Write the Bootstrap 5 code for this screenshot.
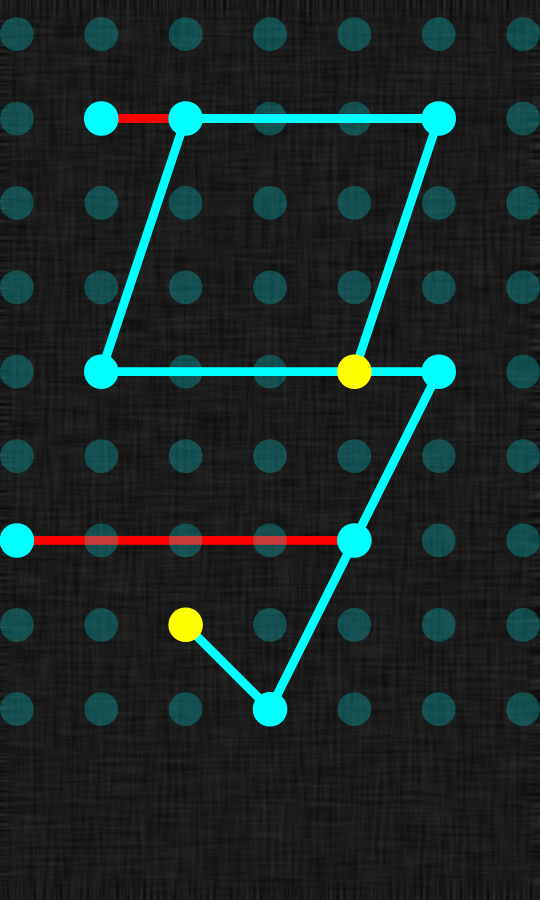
<!DOCTYPE html>
<html lang="en">
<head>
<meta charset="utf-8">
<meta name="viewport" content="width=device-width, initial-scale=1">
<title>Line puzzle</title>
<link href="https://cdn.jsdelivr.net/npm/bootstrap@5.3.0/dist/css/bootstrap.min.css" rel="stylesheet">
<style>
  body { background: #1b1d1c; }
  .cloth { z-index: 0; }
  .board { z-index: 1; }
  .peg { fill: #00ffff; fill-opacity: .23; }
  .wire { fill: none; stroke: #00ffff; stroke-width: 21; }
  .wire-crossed { stroke: #ff0000; }
  .knot { fill: #00ffff; }
  .knot-end { fill: #ffff00; }
</style>
<script src="https://cdn.jsdelivr.net/npm/bootstrap@5.3.0/dist/js/bootstrap.bundle.min.js"></script>
</head>
<body class="min-vh-100 position-relative overflow-x-hidden">
<!-- woven cloth texture, with frayed threads along the borders -->
<svg class="cloth position-absolute top-0 start-0 w-100 h-100" aria-hidden="true">
  <defs>
    <filter id="weave" x="0" y="0" width="100%" height="100%" color-interpolation-filters="sRGB">
      <feTurbulence type="fractalNoise" baseFrequency="0.02 0.24" numOctaves="3" seed="4"/>
      <feColorMatrix values="1 0 0 0 0  1 0 0 0 0  1 0 0 0 0  0 0 0 0 1" result="across"/>
      <feTurbulence type="fractalNoise" baseFrequency="0.24 0.02" numOctaves="3" seed="9"/>
      <feColorMatrix values="1 0 0 0 0  1 0 0 0 0  1 0 0 0 0  0 0 0 0 1" result="down"/>
      <feComposite in="across" in2="down" operator="arithmetic" k2=".5" k3=".5"/>
      <feColorMatrix values=".17 0 0 0 .018  0 .17 0 0 .023  0 0 .17 0 .019  0 0 0 0 1"/>
    </filter>
    <filter id="fray-x" x="0" y="0" width="100%" height="100%" color-interpolation-filters="sRGB">
      <feTurbulence type="fractalNoise" baseFrequency="0.01 0.3" numOctaves="2" seed="3"/>
      <feColorMatrix values=".35 0 0 0 -.075  .35 0 0 0 -.07  .35 0 0 0 -.072  0 0 0 0 .75"/>
    </filter>
    <filter id="fray-y" x="0" y="0" width="100%" height="100%" color-interpolation-filters="sRGB">
      <feTurbulence type="fractalNoise" baseFrequency="0.3 0.01" numOctaves="2" seed="7"/>
      <feColorMatrix values=".35 0 0 0 -.075  .35 0 0 0 -.07  .35 0 0 0 -.072  0 0 0 0 .75"/>
    </filter>
    <linearGradient id="fade-x"><stop offset="0" stop-color="#fff"/><stop offset=".03" stop-color="#000"/><stop offset=".97" stop-color="#000"/><stop offset="1" stop-color="#fff"/></linearGradient>
    <linearGradient id="fade-y" x2="0" y2="1"><stop offset="0" stop-color="#fff"/><stop offset=".03" stop-color="#000"/><stop offset=".97" stop-color="#000"/><stop offset="1" stop-color="#fff"/></linearGradient>
    <mask id="sides"><rect width="100%" height="100%" fill="url(#fade-x)"/></mask>
    <mask id="ends"><rect width="100%" height="100%" fill="url(#fade-y)"/></mask>
  </defs>
  <rect width="100%" height="100%" filter="url(#weave)"/>
  <g mask="url(#sides)"><rect width="100%" height="100%" filter="url(#fray-x)"/></g>
  <g mask="url(#ends)"><rect width="100%" height="100%" filter="url(#fray-y)"/></g>
</svg>
<main class="position-relative board">
  <svg class="d-block w-100" viewBox="0 0 1280 1780" role="img" aria-label="Puzzle board: a line wound over a grid of pegs, crossed sections in red">
    <path class="wire wire-crossed" d="M240 281H440M40 1281H840"/>
    <g id="pegs"></g>
    <path class="wire" d="M440 281H1040L840 881M440 281L240 881H1040L640 1681L440 1481"/>
    <circle class="knot" cx="240" cy="281" r="41"/>
    <circle class="knot" cx="440" cy="281" r="41"/>
    <circle class="knot" cx="1040" cy="281" r="41"/>
    <circle class="knot" cx="240" cy="881" r="41"/>
    <circle class="knot" cx="1040" cy="881" r="41"/>
    <circle class="knot" cx="40" cy="1281" r="41"/>
    <circle class="knot" cx="840" cy="1281" r="41"/>
    <circle class="knot" cx="640" cy="1681" r="41"/>
    <circle class="knot-end" cx="840" cy="881" r="41"/>
    <circle class="knot-end" cx="440" cy="1481" r="41"/>
  </svg>
</main>
<script>
  const pegs = document.getElementById('pegs');
  for (let row = 0; row < 9; row++) {
    for (let col = 0; col < 7; col++) {
      const peg = document.createElementNS('http://www.w3.org/2000/svg', 'circle');
      peg.setAttribute('class', 'peg');
      peg.setAttribute('cx', 40 + col * 200);
      peg.setAttribute('cy', 81 + row * 200);
      peg.setAttribute('r', 40);
      pegs.append(peg);
    }
  }
</script>
</body>
</html>
